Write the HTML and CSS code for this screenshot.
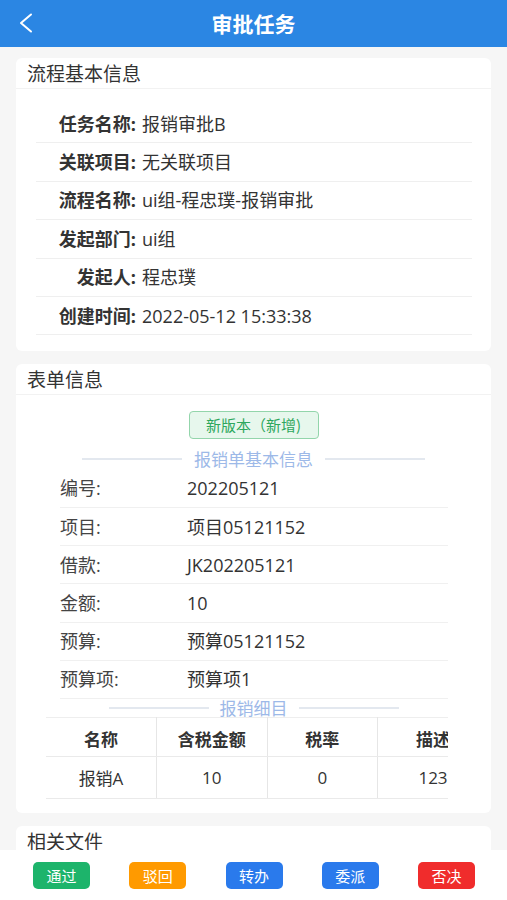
FILE: index.html
```html
<!DOCTYPE html>
<html lang="zh-CN">
<head>
<meta charset="utf-8">
<title>审批任务</title>
<link rel="stylesheet" href="styles.css">
</head>
<body>
<div class="app">
  <header class="topbar">
    <span class="back">
      <svg width="16" height="20" viewBox="0 0 16 20"><path d="M13 1.5 L3 10 L13 18.5" fill="none" stroke="#fff" stroke-width="2" stroke-linecap="round" stroke-linejoin="round"/></svg>
    </span>
    <h1 class="title">审批任务</h1>
  </header>

  <main class="content">
    <section class="card">
      <div class="card-head">流程基本信息</div>
      <div class="info-list">
        <div class="info-row"><span class="info-label">任务名称:</span><span class="info-value">报销审批B</span></div>
        <div class="info-row"><span class="info-label">关联项目:</span><span class="info-value">无关联项目</span></div>
        <div class="info-row"><span class="info-label">流程名称:</span><span class="info-value">ui组-程忠璞-报销审批</span></div>
        <div class="info-row"><span class="info-label">发起部门:</span><span class="info-value">ui组</span></div>
        <div class="info-row"><span class="info-label">发起人:</span><span class="info-value">程忠璞</span></div>
        <div class="info-row"><span class="info-label">创建时间:</span><span class="info-value">2022-05-12 15:33:38</span></div>
      </div>
    </section>

    <section class="card">
      <div class="card-head">表单信息</div>
      <div class="form-body">
        <div class="badge-wrap"><span class="badge">新版本（新增)</span></div>
        <div class="sub-title sub-title-wide"><span class="line"></span><span class="sub-text">报销单基本信息</span><span class="line"></span></div>
        <div class="form-list">
          <div class="form-row"><span class="form-label">编号:</span><span class="form-value">202205121</span></div>
          <div class="form-row"><span class="form-label">项目:</span><span class="form-value">项目05121152</span></div>
          <div class="form-row"><span class="form-label">借款:</span><span class="form-value">JK202205121</span></div>
          <div class="form-row"><span class="form-label">金额:</span><span class="form-value">10</span></div>
          <div class="form-row"><span class="form-label">预算:</span><span class="form-value">预算05121152</span></div>
          <div class="form-row"><span class="form-label">预算项:</span><span class="form-value">预算项1</span></div>
        </div>
        <div class="sub-title sub-title-narrow"><span class="line"></span><span class="sub-text">报销细目</span><span class="line"></span></div>
        <div class="table-wrap">
          <table class="detail-table">
            <thead>
              <tr><th>名称</th><th>含税金额</th><th>税率</th><th>描述</th></tr>
            </thead>
            <tbody>
              <tr><td>报销A</td><td>10</td><td>0</td><td>123</td></tr>
            </tbody>
          </table>
        </div>
      </div>
    </section>

    <section class="card">
      <div class="card-head">相关文件</div>
      <div class="files-body"></div>
    </section>
  </main>

  <footer class="actions">
    <button class="btn btn-green">通过</button>
    <button class="btn btn-orange">驳回</button>
    <button class="btn btn-blue">转办</button>
    <button class="btn btn-blue">委派</button>
    <button class="btn btn-red">否决</button>
  </footer>
</div>
</body>
</html>
```

FILE: styles.css
```css
* { box-sizing: border-box; }
html, body { margin: 0; padding: 0; }
body {
  font-family: "Open Sans", "Noto Sans CJK SC", sans-serif;
  color: #333;
  background: #f6f6f6;
}
.app {
  height: 900px;
  display: flex;
  flex-direction: column;
  overflow: hidden;
}
.topbar {
  height: 47px;
  flex: 0 0 47px;
  background: #2b86e3;
  display: flex;
  align-items: center;
  justify-content: center;
  position: relative;
}
.back {
  position: absolute;
  left: 18px;
  top: 13px;
  width: 16px;
  height: 20px;
  display: block;
}
.back svg { display: block; }
.title {
  margin: 0;
  font-family: "Noto Sans CJK SC", sans-serif;
  font-size: 21px;
  font-weight: 700;
  color: #fff;
  line-height: 47px;
}
.content {
  flex: 1 1 auto;
  overflow: hidden;
  padding: 11px 16px 0;
  display: flex;
  flex-direction: column;
  gap: 13px;
}
.card {
  background: #fff;
  border-radius: 6px;
  flex: 0 0 auto;
}
.card-head {
  padding: 2px 11px 0;
  height: 31px;
  line-height: 26px;
  font-family: "Noto Sans CJK SC", sans-serif;
  font-size: 19px;
  color: #333;
  border-bottom: 1px solid #f2f2f2;
}
.info-list {
  padding: 16px 19px 15.5px 20px;
}
.info-row {
  height: 38.4px;
  display: flex;
  align-items: center;
  border-bottom: 1px solid #efefef;
  font-size: 18px;
  line-height: 24px;
}
.info-label {
  width: 100px;
  text-align: right;
  font-weight: 700;
  color: #333;
  flex: 0 0 100px;
}
.info-value {
  margin-left: 6px;
  color: #333;
}
.form-body {
  padding: 16px 0 14px;
}
.badge-wrap {
  display: flex;
  justify-content: center;
}
.badge {
  display: inline-block;
  width: 130px;
  height: 28px;
  line-height: 26px;
  text-align: center;
  font-family: "Noto Sans CJK SC", sans-serif;
  font-size: 15px;
  color: #2ea75d;
  background: #e7f7ed;
  border: 1px solid #93d5ab;
  border-radius: 4px;
}
.sub-title {
  display: flex;
  align-items: center;
  justify-content: center;
  color: #9db9e8;
  font-size: 17px;
}
.sub-title .line {
  height: 2px;
  background: #e3e8ef;
}
.sub-title-wide {
  margin-top: 9px;
  height: 22px;
}
.sub-title-wide .line { width: 100px; }
.sub-title-wide .sub-text { margin: 0 12px; }
.sub-title-narrow {
  height: 18px;
}
.sub-title-narrow .line { width: 100px; }
.sub-title-narrow .sub-text { margin: 0 11px; }
.form-list {
  padding: 0 43px 0 44px;
}
.form-row {
  height: 38.2px;
  display: flex;
  align-items: center;
  border-bottom: 1px solid #f0f0f0;
  font-size: 18px;
  line-height: 24px;
}
.form-label {
  width: 127px;
  flex: 0 0 127px;
  color: #444;
}
.form-value {
  color: #333;
}
.table-wrap {
  margin-left: 30px;
  width: 402px;
  overflow: hidden;
}
.detail-table {
  width: 442px;
  border-collapse: collapse;
  table-layout: fixed;
  font-size: 17px;
  border-top: 1px solid #eeeeee;
}
.detail-table th,
.detail-table td {
  width: 110.5px;
  text-align: center;
  border-bottom: 1px solid #eaeaea;
  border-left: 1px solid #e6e6e6;
  padding: 0;
}
.detail-table th:first-child,
.detail-table td:first-child { border-left: none; }
.detail-table th {
  height: 39px;
  font-weight: 700;
  color: #333;
  padding-top: 3px;
}
.detail-table td {
  height: 42px;
  color: #333;
}
.files-body {
  height: 80px;
}
.actions {
  flex: 0 0 50px;
  height: 50px;
  background: #fff;
  display: flex;
  justify-content: space-between;
  align-items: flex-start;
  padding: 12px 32px 0 33px;
}
.btn {
  width: 57px;
  height: 27px;
  border: none;
  border-radius: 5px;
  color: #fff;
  font-family: "Noto Sans CJK SC", sans-serif;
  font-size: 15px;
  line-height: 27px;
  padding: 0;
}
.btn-green { background: #1db46b; }
.btn-orange { background: #ff9a00; }
.btn-blue { background: #2a7aec; }
.btn-red { background: #f02c2c; }
```
